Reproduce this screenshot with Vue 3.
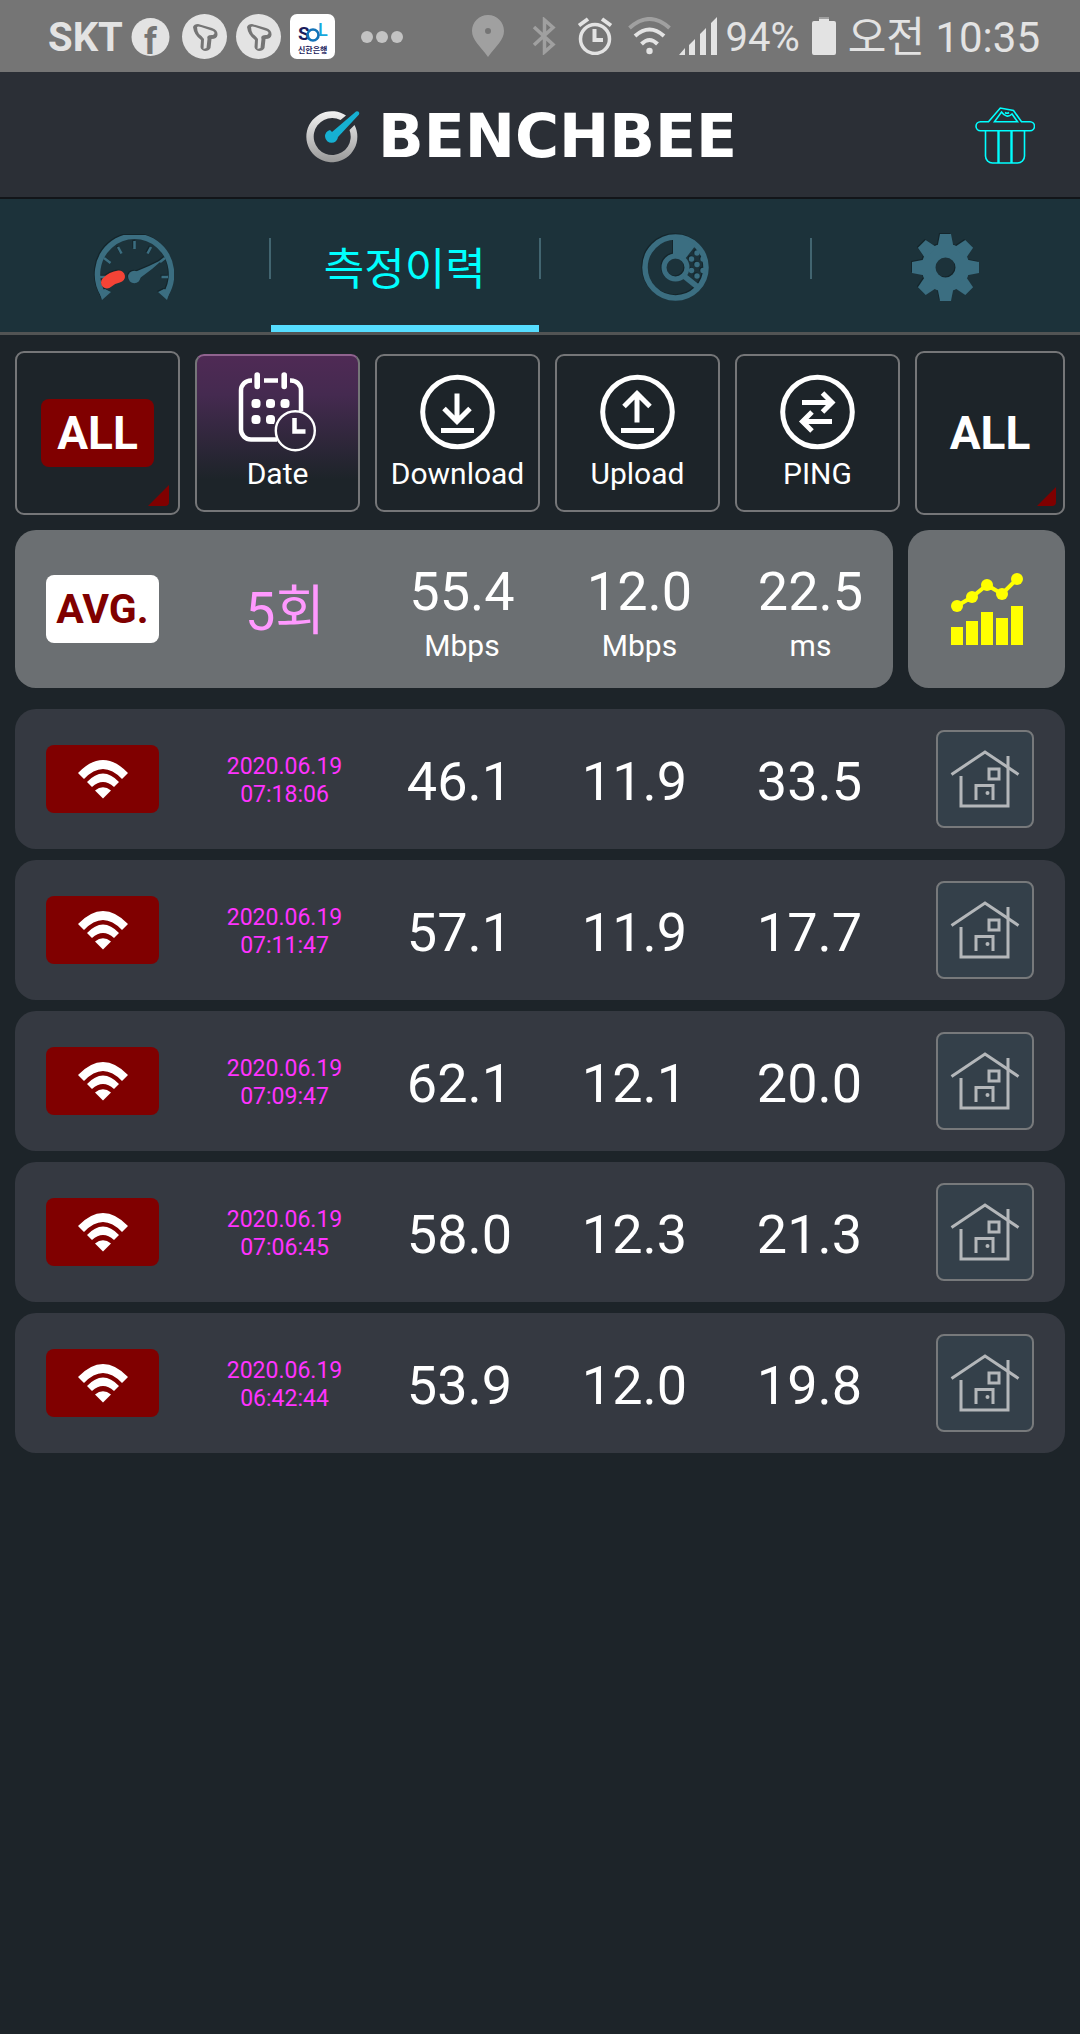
<template>
  <div class="pantalla">

    <!-- STATUS BAR -->
    <div class="status">
      <div class="status-group">
        <span class="carrier">SKT</span>
        <svg class="app-icon" viewBox="0 0 45 45">
          <circle cx="22.5" cy="23" r="19" fill="#e3e3e3" />
          <text x="16" y="40" font-size="36" font-weight="700" font-family="Roboto" fill="#757575">f</text>
        </svg>
        <svg v-for="n in 2" :key="n" class="app-icon" viewBox="0 0 45 45">
          <circle cx="22.5" cy="22.5" r="22.5" fill="#e3e3e3" />
          <path d="M11 13Q12 10 16 10L30 14Q36 16 35.500 21Q35 25 29.500 25L28.500 34Q27 37 23 37Q19 36 18.500 33L19 26Q12 21 11 13Z" fill="#757575" />
          <path d="M15 13Q16 12 19 13L31 17Q34 19 31 21Q24 20.500 25.500 25L24.500 34L21.500 35L22 25Q20 22 17 20Q15 17 15 13Z" fill="#e3e3e3" />
        </svg>
        <svg class="app-icon" viewBox="0 0 45 45">
          <rect width="45" height="45" rx="7" fill="#fff" />
          <text x="8" y="26" font-size="19" font-weight="700" font-family="Roboto" fill="#1b1c5c">S</text>
          <text x="28" y="22" font-size="18" font-weight="500" font-family="Roboto" fill="#16a8dc">L</text>
          <circle cx="23" cy="21" r="5.500" fill="none" stroke="#1273b8" stroke-width="2.600" />
          <text x="8" y="39" font-size="8" font-weight="700" font-family="Noto Sans CJK KR" fill="#1b1c5c">신한은행</text>
        </svg>
        <svg class="more" viewBox="0 0 76 45" fill="#c3c3c3">
          <circle cx="23" cy="23" r="6" />
          <circle cx="38" cy="23" r="6" />
          <circle cx="53" cy="23" r="6" />
        </svg>
      </div>

      <div class="status-group right">
        <svg width="60" height="42" viewBox="0 0 60 42" fill="#a0a0a0">
          <path fill-rule="evenodd" d="M30 0C21 0 14 7 14 16C14 25 22 31 30 42C38 31 46 25 46 16C46 7 39 0 30 0ZM30 13A3 3 0 1 1 30 19A3 3 0 1 1 30 13Z" />
        </svg>
        <svg width="36" height="38" viewBox="0 0 36 38" fill="none" stroke="#a0a0a0" stroke-width="3.500">
          <path d="M8 10L27 27.500L18.500 35V3L27 10.500L8 28" />
        </svg>
        <svg width="50" height="38" viewBox="0 0 50 38" fill="none" stroke="#e3e3e3" stroke-width="3.500">
          <circle cx="25" cy="22" r="14.500" />
          <path d="M24.500 12V23H33M9 8.500L18 2M41 8.500L32 2" stroke-width="4" />
        </svg>
        <svg width="43" height="38" viewBox="0 0 43 38" fill="none" stroke="#e3e3e3" stroke-width="4">
          <path d="M1.500 11Q21.500 -7 41.500 11" stroke="#a0a0a0" />
          <path d="M7 19Q21.500 6 36 19M13.500 27Q21.500 19 29.500 27" />
          <circle cx="21.500" cy="34" r="3.200" fill="#e3e3e3" stroke="none" />
        </svg>
        <svg width="38" height="38" viewBox="0 0 38 38" fill="#e3e3e3">
          <path d="M0 38L6 31V38ZM10 28L16 22V38H10ZM21 17L27 11V38H21ZM32 6L38 0V38H32Z" />
        </svg>
        <span class="battery-text">94%</span>
        <svg width="32" height="38" viewBox="0 0 32 38">
          <rect x="11" y="0" width="10" height="5" fill="#a0a0a0" />
          <path d="M4 6Q4 4 6 4H11V2H21V4H26Q28 4 28 6V36Q28 38 26 38H6Q4 38 4 36Z" fill="#e3e3e3" />
        </svg>
        <span class="clock">오전 10:35</span>
      </div>
    </div>

    <!-- HEADER -->
    <header class="header">
      <div class="logo">
        <svg width="56" height="54" viewBox="0 0 56 54">
          <defs>
            <linearGradient id="metal" x1="0" y1="0" x2="0" y2="1">
              <stop offset="0" stop-color="#f2f2f2" />
              <stop offset="1" stop-color="#999" />
            </linearGradient>
          </defs>
          <path d="M40 6.500A25.500 25.500 0 1 0 48.500 16L43.500 21A18.500 18.500 0 1 1 34.500 11Z" fill="url(#metal)" />
          <path d="M26 23L50 2.500A2.200 2.200 0 0 1 53 5.500L32 28A6.500 6.500 0 1 1 24 21Z" fill="#16b0d2" />
        </svg>
        <span class="brand">BENCHBEE</span>
      </div>
      <button class="trash" aria-label="Delete" @click="borrarTodo">
        <svg width="60" height="58" viewBox="0 0 60 58" fill="none" stroke="#0ff" stroke-width="1.600">
          <path d="M13.500 14.700L25.300 1L38.500 3.500L46.500 14.700H55A4.500 4.500 0 0 1 55 23.700H5.500A4.500 4.500 0 0 1 5.500 14.700Z" />
          <path d="M19.500 14.700L26.500 5Q31.500 12 37 7L42.500 14.700ZM30 5.500Q32 7 34 5.500" />
          <path d="M10.500 24V49A7 7 0 0 0 17.500 56H42.500A7 7 0 0 0 49.500 49V24" />
          <path d="M23.500 24V56M36.500 24V56" stroke-width="2.400" />
        </svg>
      </button>
    </header>

    <!-- TABS -->
    <nav class="tabs">
      <button class="tab" :class="{ active: tab === 'speed' }" aria-label="Speed" @click="tab = 'speed'">
        <svg width="80" height="66" viewBox="0 0 80 66" fill="none" stroke="#3b6e81">
          <path d="M9.500 60A37 38 0 1 1 71.500 60" stroke-width="5.500" />
          <path d="M5 56L8 65L17 57L11 54ZM76 56L73 65L64 57L70 54Z" fill="#3b6e81" stroke="none" />
          <path d="M6 42H12M10 23L16.500 28M24 12L27.500 18.500M40.500 6V14M57 12L53.500 18.500M66 27L71 23M67.500 42H74" stroke-width="2.500" />
          <path d="M42 36.500L55 31L69.500 24L58 34L46 43Z" fill="#3b6e81" stroke="none" />
          <circle cx="40.300" cy="42" r="6.200" fill="#3b6e81" stroke="none" />
          <path d="M13 47.500Q18 42.500 25 41.500" stroke="#f44336" stroke-width="12" stroke-linecap="round" />
        </svg>
      </button>
      <span class="sep"></span>
      <button class="tab" :class="{ active: tab === 'history' }" @click="tab = 'history'">측정이력</button>
      <span class="sep"></span>
      <button class="tab" :class="{ active: tab === 'stats' }" aria-label="Statistics" @click="tab = 'stats'">
        <svg width="67" height="67" viewBox="0 0 67 67" fill="none" stroke="#3b6e81">
          <circle cx="33.500" cy="33.500" r="30.500" stroke-width="5.500" />
          <circle cx="33.500" cy="33.500" r="11.500" stroke-width="5" />
          <path d="M31 3V24L43 25L54 11Q44 2 31 3Z" fill="#3b6e81" stroke="none" />
          <path d="M42 42L57 54" stroke-width="5.500" />
          <g fill="#3b6e81" stroke="none">
            <circle v-for="(d, i) in puntos" :key="i" :cx="d[0]" :cy="d[1]" r="2.700" />
          </g>
        </svg>
      </button>
      <span class="sep"></span>
      <button class="tab" :class="{ active: tab === 'settings' }" aria-label="Settings" @click="tab = 'settings'">
        <svg width="67" height="67" viewBox="0 0 67 67">
          <circle cx="33.500" cy="33.500" r="17" fill="none" stroke="#3b6e81" stroke-width="14" />
          <path v-for="n in 8" :key="n" d="M28 0H39L41.500 13H25.500Z" fill="#3b6e81" :transform="`rotate(${n * 45} 33.5 33.5)`" />
        </svg>
      </button>
    </nav>

    <main class="content">
      <!-- FILTERS -->
      <div class="filters">
        <button class="filter tall">
          <span class="badge all">ALL</span>
          <span class="corner"></span>
        </button>

        <button
          v-for="f in filtros"
          :key="f.id"
          class="filter"
          :class="{ selected: orden === f.id }"
          @click="orden = f.id"
        >
          <svg v-if="f.id === 'date'" width="80" height="80" viewBox="0 0 80 80" fill="none" stroke="#fff" stroke-width="4.500">
            <path d="M14 8.500H13A10 10 0 0 0 3 18.500V57.500A10 10 0 0 0 13 67.500H39M26 8.500H40M52 8.500H53A10 10 0 0 1 63 18.500V39" />
            <path d="M19.200 3V14.500M46.200 3V14.500" stroke-width="5.600" stroke-linecap="round" />
            <g fill="#fff" stroke="none">
              <rect x="13.500" y="27" width="9" height="9" rx="3.500" />
              <rect x="28" y="27" width="9" height="9" rx="3.500" />
              <rect x="42.500" y="27" width="9" height="9" rx="3.500" />
              <rect x="13.500" y="43" width="9" height="9" rx="3.500" />
              <path d="M31.500 43H33.500Q37 43 37 46.500V49L36 52H31.500Q28 52 28 48.500V46.500Q28 43 31.500 43Z" />
            </g>
            <circle cx="57.300" cy="58.700" r="19.500" stroke-width="2.400" />
            <path d="M56.500 46V59.500H67.500" />
          </svg>
          <svg v-else width="75" height="80" viewBox="0 -2.500 75 80" fill="none" stroke="#fff" stroke-width="5">
            <circle cx="37.500" cy="37.500" r="34.800" />
            <path :d="f.icono" />
          </svg>
          <span class="filter-label">{{ f.texto }}</span>
        </button>

        <button class="filter tall">
          <span class="all">ALL</span>
          <span class="corner small"></span>
        </button>
      </div>

      <!-- AVERAGE -->
      <div class="summary">
        <div class="average">
          <span class="badge avg">AVG.</span>
          <span class="count">{{ mediciones.length }}회</span>
          <div v-for="(m, i) in medias" :key="i" class="mean">
            <div class="value">{{ m.valor }}</div>
            <div class="unit">{{ m.unidad }}</div>
          </div>
        </div>
        <button class="chart" aria-label="Chart">
          <svg width="72" height="72" viewBox="0 0 72 72" fill="#ff0">
            <path d="M0 54H12V72H0ZM15 48H27V72H15ZM30 39H42V72H30ZM45 45H57V72H45ZM60 33H72V72H60Z" />
            <path d="M6 33L21 24L36 12L51 21L66 6" fill="none" stroke="#ff0" stroke-width="4" />
            <circle cx="6" cy="33" r="6" />
            <circle cx="21" cy="24" r="6" />
            <circle cx="36" cy="12" r="6" />
            <circle cx="51" cy="21" r="6" />
            <circle cx="66" cy="6" r="6" />
          </svg>
        </button>
      </div>

      <!-- HISTORY -->
      <table class="history">
        <tbody>
          <tr v-for="m in mediciones" :key="m.hora">
            <td>
              <span class="badge">
                <svg width="50" height="39" viewBox="0 0 50 39" fill="#fff">
                  <path d="M0 13Q25 -13 50 13L44 19Q25 -1 6 19Z" />
                  <path d="M9 22Q25 5 41 22L36 27Q25 17 14 27Z" />
                  <path d="M17 30.500Q25 24 33 30.500L25 38.500Z" />
                </svg>
              </span>
            </td>
            <td class="date">{{ m.fecha }}<br />{{ m.hora }}</td>
            <td class="value">{{ m.bajada }}</td>
            <td class="value">{{ m.subida }}</td>
            <td class="value">{{ m.ping }}</td>
            <td>
              <button class="place" aria-label="Home">
                <svg width="70" height="60" viewBox="0 0 70 60" fill="none" stroke="#b4b7ba" stroke-width="3">
                  <path d="M1.500 25.500L35 3L68.500 25.500" />
                  <path d="M11 27V57H58V7" />
                  <rect x="39" y="20" width="10" height="10" />
                  <path d="M26 51V36.500H43V51" />
                  <circle cx="37.500" cy="44" r="2" fill="#b4b7ba" stroke="none" />
                </svg>
              </button>
            </td>
          </tr>
        </tbody>
      </table>
    </main>

  </div>
</template>

<script setup>
import { ref } from "vue"

const tab = ref("history")
const orden = ref("date")

const filtros = [
  { id: "date", texto: "Date" },
  { id: "download", texto: "Download", icono: "M37 19V46M24 34L37 47L50 34M21 56H54" },
  { id: "upload", texto: "Upload", icono: "M37 48V21M24 32L37 19L50 32M21 56H54" },
  { id: "ping", texto: "PING", icono: "M22 28H52M42.500 18.500L52 28L42.500 37.500M52 47H22M32 37.500L22.500 47L32 56.500" }
]

const medias = ref([
  { valor: "55.4", unidad: "Mbps" },
  { valor: "12.0", unidad: "Mbps" },
  { valor: "22.5", unidad: "ms" }
])

const mediciones = ref([
  { fecha: "2020.06.19", hora: "07:18:06", bajada: "46.1", subida: "11.9", ping: "33.5" },
  { fecha: "2020.06.19", hora: "07:11:47", bajada: "57.1", subida: "11.9", ping: "17.7" },
  { fecha: "2020.06.19", hora: "07:09:47", bajada: "62.1", subida: "12.1", ping: "20.0" },
  { fecha: "2020.06.19", hora: "07:06:45", bajada: "58.0", subida: "12.3", ping: "21.3" },
  { fecha: "2020.06.19", hora: "06:42:44", bajada: "53.9", subida: "12.0", ping: "19.8" }
])

// textura del icono de estadísticas
const puntos = [[55, 19], [49.5, 25], [55, 30.5], [49.5, 36.5], [55, 42], [61, 25], [61, 36.5]]

function borrarTodo() {
  mediciones.value = []
}
</script>

<style>
body {
  background: #1d2429;
}
</style>

<style scoped>
.pantalla {
  min-height: 100vh;
  background: #1d2429;
  color: #fff;
  font-family: Roboto, "Noto Sans CJK KR", sans-serif;
}

button {
  margin: 0;
  padding: 0;
  border: 0;
  background: none;
  color: inherit;
  font: inherit;
  cursor: pointer;
}

svg {
  display: block;
  flex-shrink: 0;
}

/* status bar */
.status {
  display: flex;
  justify-content: space-between;
  align-items: center;
  height: 72px;
  padding: 0 40px 0 48px;
  background: #757575;
  color: #e3e3e3;
  white-space: nowrap;
}

.status-group {
  display: flex;
  align-items: center;
  gap: 9px;
}

.status-group.right {
  gap: 8px;
}

.carrier {
  margin-right: -4px;
  padding-top: 3px;
  font-size: 40px;
  font-weight: 700;
}

.app-icon {
  width: 45px;
  height: 45px;
  overflow: visible;
}

.more {
  width: 76px;
  height: 45px;
}

.battery-text {
  padding-top: 3px;
  font-size: 40px;
}

.clock {
  padding-top: 4px;
  font-size: 42px;
  line-height: 48px;
}

/* header */
.header {
  display: grid;
  grid-template-columns: 1fr auto 1fr;
  align-items: center;
  height: 127px;
  box-sizing: border-box;
  padding: 2px 45px 0;
  border-bottom: 2px solid #121519;
  background: #2b2f36;
}

.logo {
  grid-column: 2;
  display: flex;
  align-items: center;
  gap: 16px;
  min-width: 468px;
}

.brand {
  font-family: "DejaVu Sans", sans-serif;
  font-size: 60px;
  font-weight: 700;
  line-height: 60px;
}

.trash {
  justify-self: end;
}

/* tabs */
.tabs {
  display: flex;
  align-items: stretch;
  height: 136px;
  box-sizing: border-box;
  border-bottom: 3px solid #525454;
  background: #1c323a;
}

.tab {
  flex: 1;
  display: flex;
  justify-content: center;
  align-items: center;
  box-sizing: border-box;
  border-top: 7px solid transparent;
  border-bottom: 7px solid transparent;
  color: #0ff;
  font-size: 44px;
}

.tab.active {
  border-bottom-color: #55ddff;
}

.tab svg {
  margin-top: 4px;
  filter: drop-shadow(-1px -1px 0 #14252b);
}

.sep {
  width: 2px;
  height: 41px;
  margin-top: 39px;
  background: #426570;
}

/* filters */
.content {
  padding: 16px 15px;
}

.filters {
  display: grid;
  grid-template-columns: repeat(5, 11fr) 10fr;
  align-items: center;
  gap: 15px;
  margin-bottom: 15px;
}

.filter {
  position: relative;
  display: flex;
  flex-direction: column;
  justify-content: center;
  align-items: center;
  gap: 4px;
  min-width: 0;
  height: 158px;
  box-sizing: border-box;
  padding-bottom: 2px;
  border: 2px solid #757678;
  border-radius: 9px;
}

.filter.tall {
  height: 164px;
  padding-bottom: 0;
}

.filter.selected {
  border-top-color: #90638f;
  background: linear-gradient(#4f2a55, #452a50 25%, #1d2429 80%);
}

.filter-label {
  font-size: 30px;
  line-height: 36px;
}

.corner {
  position: absolute;
  right: 9px;
  bottom: 7px;
  width: 21px;
  height: 21px;
  border-bottom-right-radius: 4px;
  background: #800000;
  clip-path: polygon(100% 0, 100% 100%, 0 100%);
}

.corner.small {
  right: 7px;
  width: 19px;
  height: 19px;
}

.badge {
  display: flex;
  justify-content: center;
  align-items: center;
  width: 113px;
  height: 68px;
  border-radius: 8px;
  background: #800000;
}

.all {
  font-size: 46px;
  font-weight: 700;
}

.avg {
  background: #fff;
  color: #800000;
  font-size: 41px;
  font-weight: 700;
}

/* average */
.summary {
  display: grid;
  grid-template-columns: 878fr 157fr;
  gap: 15px;
  margin-bottom: 21px;
}

.average,
.chart {
  height: 158px;
  border-radius: 21px;
  background: #6b6f72;
}

.average {
  display: grid;
  grid-template-columns: 151fr 176fr 178fr 177fr 165fr;
  align-items: center;
  padding-left: 31px;
}

.chart {
  display: flex;
  justify-content: center;
  align-items: center;
}

.count {
  padding-top: 5px;
  color: #ff99ff;
  font-size: 54px;
  line-height: 64px;
  text-align: center;
}

.mean {
  padding-top: 5px;
  text-align: center;
}

.value {
  padding-top: 5px;
  font-size: 54px;
  line-height: 64px;
  text-align: center;
}

.unit {
  font-size: 30px;
  line-height: 44px;
}

/* history */
.history {
  display: block;
}

.history tbody {
  display: flex;
  flex-direction: column;
  gap: 11px;
}

.history tr {
  display: grid;
  grid-template-columns: 151fr 175fr 175fr 175fr 175fr 137fr;
  align-items: center;
  height: 140px;
  padding: 0 31px;
  border-radius: 21px;
  background: #353941;
}

.history td {
  padding: 0;
}

.history .date {
  padding-top: 3px;
  color: #ff33ff;
  font-size: 23px;
  line-height: 28px;
  text-align: center;
}

.history .value {
  padding-top: 5px;
}

.place {
  display: flex;
  justify-content: center;
  align-items: center;
  width: 98px;
  height: 98px;
  margin-left: auto;
  box-sizing: border-box;
  border: 2px solid #77797b;
  border-radius: 8px;
  background: #34404a;
}
</style>
